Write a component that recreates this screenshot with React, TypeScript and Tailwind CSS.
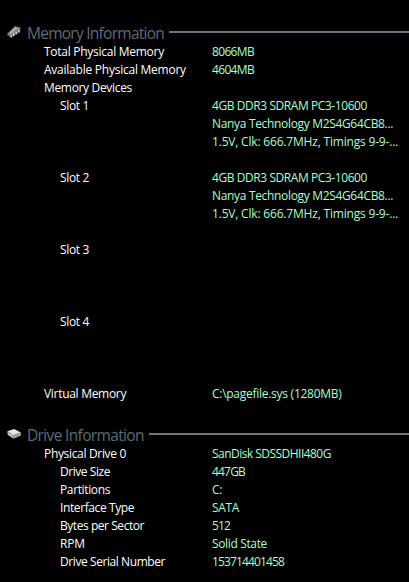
import type { ReactNode } from 'react';

type Item = { label?: string; lt?: string; value?: string; vt?: string; nested?: boolean };

const memory: Item[] = [
  { label: 'Total Physical Memory', lt: 'tracking-[-0.27px]', value: '8066MB', vt: 'tracking-[-0.67px]' },
  { label: 'Available Physical Memory', lt: 'tracking-[-0.24px]', value: '4604MB', vt: 'tracking-[-0.67px]' },
  { label: 'Memory Devices', lt: 'tracking-[-0.33px]' },
  { label: 'Slot 1', lt: 'tracking-[-0.35px]', value: '4GB DDR3 SDRAM PC3-10600', vt: 'tracking-[-0.43px]', nested: true },
  { value: 'Nanya Technology M2S4G64CB8...', vt: 'tracking-[-0.33px]' },
  { value: '1.5V, Clk: 666.7MHz, Timings 9-9-...', vt: 'tracking-[-0.19px]' },
  {},
  { label: 'Slot 2', lt: 'tracking-[-0.35px]', value: '4GB DDR3 SDRAM PC3-10600', vt: 'tracking-[-0.43px]', nested: true },
  { value: 'Nanya Technology M2S4G64CB8...', vt: 'tracking-[-0.33px]' },
  { value: '1.5V, Clk: 666.7MHz, Timings 9-9-...', vt: 'tracking-[-0.19px]' },
  {},
  { label: 'Slot 3', lt: 'tracking-[-0.35px]', nested: true },
  {},
  {},
  {},
  { label: 'Slot 4', lt: 'tracking-[-0.35px]', nested: true },
  {},
  {},
  {},
  { label: 'Virtual Memory', lt: 'tracking-[-0.3px]', value: 'C:\\pagefile.sys (1280MB)', vt: 'tracking-[-0.27px]' },
];

const drive: Item[] = [
  { label: 'Physical Drive 0', lt: 'tracking-[-0.33px]', value: 'SanDisk SDSSDHII480G', vt: 'tracking-[-0.53px]' },
  { label: 'Drive Size', lt: 'tracking-[-0.45px]', value: '447GB', vt: 'tracking-[-0.81px]', nested: true },
  { label: 'Partitions', lt: 'tracking-[-0.37px]', value: 'C:', vt: 'tracking-[-0.2px]', nested: true },
  { label: 'Interface Type', lt: 'tracking-[-0.4px]', value: 'SATA', vt: 'tracking-[-0.34px]', nested: true },
  { label: 'Bytes per Sector', lt: 'tracking-[-0.45px]', value: '512', vt: 'tracking-[-0.86px]', nested: true },
  { label: 'RPM', lt: 'tracking-[-0.14px]', value: 'Solid State', vt: 'tracking-[-0.35px]', nested: true },
  { label: 'Drive Serial Number', lt: 'tracking-[-0.42px]', value: '153714401458', vt: 'tracking-[-0.86px]', nested: true },
];

function MemoryIcon() {
  return (
    <svg width="16" height="13" viewBox="0 0 16 13">
      <path d="M1.2 8 9 .2 14.8 2 14 6.4 4.8 11.4 1.4 9.6Z" fill="#5c5c5c" />
      <path d="M1.2 8 9 .2 14.8 2 5.6 9.4Z" fill="#909090" />
      <path d="M3.5 7.2 9.3 1.6l1.5.5L5 7.8Z" fill="#b4b4b4" />
      <path d="M5.2 9.6v1.8M7.6 7.8v2.4M10.2 5.8v2.4M12.8 3.9v2.4" stroke="#efefef" strokeWidth="1.3" />
    </svg>
  );
}

function DriveIcon() {
  return (
    <svg width="16" height="13" viewBox="0 0 16 13">
      <path d="M1.2 3.2 8 1 15 4.6 7.6 7.2Z" fill="#e6e6e6" />
      <path d="M1.2 3.2 7.6 7.2V10.8L1.8 7Z" fill="#bdbdbd" />
      <path d="M7.6 7.2 15 4.6V7.4L7.6 10.8Z" fill="#a2a2a2" />
    </svg>
  );
}

function Section({ icon, title, tracking, items }: { icon: ReactNode; title: string; tracking: string; items: Item[] }) {
  return (
    <section>
      <header className="flex h-5 items-start pl-[6px] text-[#5d6c7b]">
        <div className="mt-[3px] w-[21px] shrink-0">{icon}</div>
        <h2 className={`shrink-0 whitespace-nowrap text-[15.5px] leading-5 ${tracking}`}>{title}</h2>
        <div className="ml-[5px] mt-2 h-[2px] grow bg-[#667687]" />
      </header>
      {items.map((item, i) => (
        <div key={i} className="flex h-[18px] whitespace-nowrap text-[12px] leading-[18px]">
          <div className={`w-[212px] shrink-0 text-white ${item.nested ? 'pl-[60px]' : 'pl-[44px]'} ${item.lt ?? ''}`}>{item.label}</div>
          <div className={`text-[#aaffcc] ${item.vt ?? ''}`}>{item.value}</div>
        </div>
      ))}
    </section>
  );
}

export default function App() {
  return (
    <main className="flex h-[582px] flex-col gap-[22px] overflow-hidden bg-black pt-[23px] font-['Open_Sans',sans-serif]">
      <Section icon={<MemoryIcon />} title="Memory Information" tracking="tracking-[-0.74px]" items={memory} />
      <Section icon={<DriveIcon />} title="Drive Information" tracking="tracking-[-0.65px]" items={drive} />
    </main>
  );
}
